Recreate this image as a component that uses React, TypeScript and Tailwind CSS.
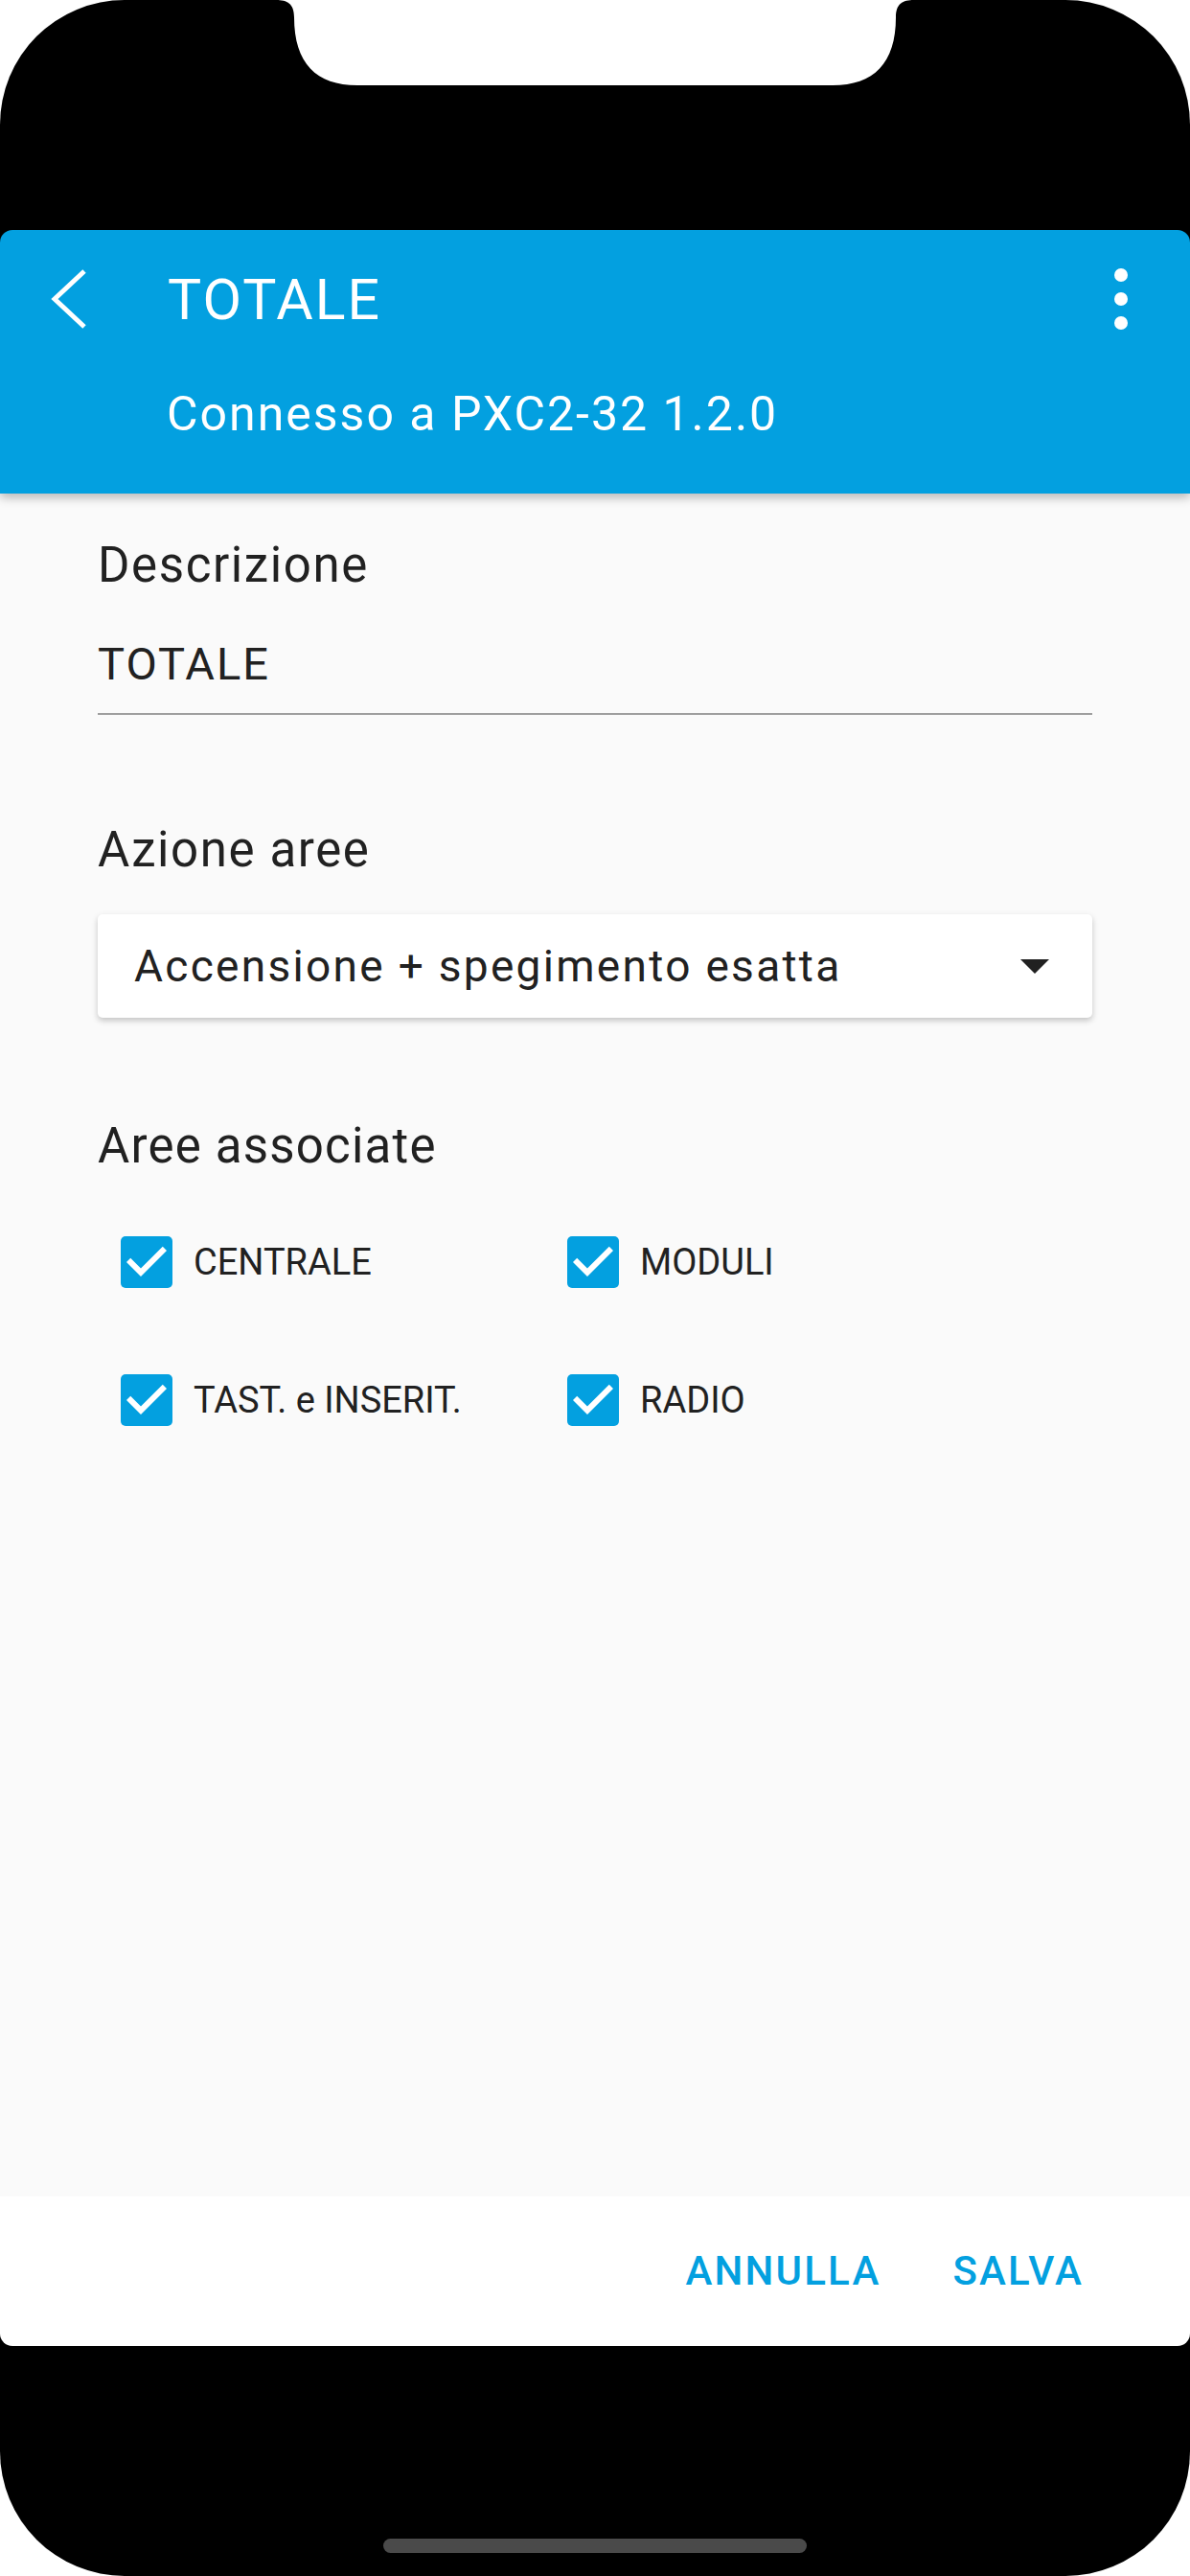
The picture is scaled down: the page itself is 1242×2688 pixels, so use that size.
const areas = ['CENTRALE', 'MODULI', 'TAST. e INSERIT.', 'RADIO'];

const Checkbox = ({ label }: { label: string }) => (
    <div className="flex items-center gap-[22px]">
        <div className="w-[54px] h-[54px] rounded-[5px] bg-[#03a0e0]">
            <svg width="54" height="54" viewBox="3 3 18 18">
                <path d="M10 17l-5-5 1.41-1.41L10 14.17l7.59-7.59L19 8l-9 9z" fill="white" />
            </svg>
        </div>
        <span className="text-[38px] leading-none text-[#212121]">{label}</span>
    </div>
);

const App = () => {
    return (
        <div className="w-[1242px] h-[2688px] bg-white font-['Roboto',sans-serif]">
            <div className="relative w-full h-full bg-black rounded-[130px] flex flex-col">
                {/* notch */}
                <svg className="absolute top-0 left-0" width="1242" height="100" viewBox="0 0 1242 100">
                    <path
                        d="M288 0 C300 0 307 4 307 18 C307 66 330 89 373 89 L869 89 C912 89 935 66 935 18 C935 4 942 0 954 0 Z"
                        fill="white"
                    />
                </svg>

                <div className="h-[240px] shrink-0" />

                <div className="flex flex-col rounded-[13px] overflow-hidden">
                    {/* app bar */}
                    <header className="relative z-10 h-[275px] bg-[#03a0e0] text-white pt-[22px] shadow-[0_4px_10px_rgba(0,0,0,0.28)]">
                        <div className="h-[100px] flex items-center">
                            <div className="w-[175px] pl-[50px]">
                                <svg width="44" height="70" viewBox="0 0 44 70">
                                    <polyline points="38,6 7,35 38,64" fill="none" stroke="white" strokeWidth="5" />
                                </svg>
                            </div>
                            <h1 className="flex-1 text-[59px] leading-none font-normal tracking-[2px]">TOTALE</h1>
                            <div className="mr-[65px] flex flex-col gap-[11px]">
                                <span className="w-[14px] h-[14px] rounded-full bg-white" />
                                <span className="w-[14px] h-[14px] rounded-full bg-white" />
                                <span className="w-[14px] h-[14px] rounded-full bg-white" />
                            </div>
                        </div>
                        <p className="mt-[45px] pl-[174px] text-[50px] leading-none tracking-[2px]">Connesso a PXC2-32 1.2.0</p>
                    </header>

                    {/* form */}
                    <main className="h-[1777px] bg-[#fafafa] px-[102px] pt-[49px] text-[#212121]">
                        <label className="block text-[51px] leading-none tracking-[1.6px]">Descrizione</label>
                        <div className="mt-[54px] text-[47px] leading-none tracking-[2px]">TOTALE</div>
                        <div className="mt-[28px] h-[2px] bg-[#9e9e9e]" />

                        <label className="block mt-[115px] text-[51px] leading-none tracking-[1.6px]">Azione aree</label>
                        <div className="mt-[42px] h-[108px] bg-white rounded-[5px] shadow-[0_3px_6px_rgba(0,0,0,0.22)] flex items-center justify-between pl-[38px] pr-[45px]">
                            <span className="text-[46px] leading-none tracking-[2.3px]">Accensione + spegimento esatta</span>
                            <svg width="30" height="15" viewBox="0 0 30 15">
                                <path d="M0 0 L30 0 L15 15 Z" fill="#212121" />
                            </svg>
                        </div>

                        <label className="block mt-[108px] text-[51px] leading-none tracking-[1.2px]">Aree associate</label>
                        <div className="mt-[69px] pl-[24px] grid grid-cols-[466px_1fr] gap-y-[90px]">
                            {areas.map((a) => (
                                <Checkbox key={a} label={a} />
                            ))}
                        </div>
                    </main>

                    {/* actions */}
                    <footer className="h-[156px] bg-white flex items-center justify-end gap-[75px] pr-[111px] text-[#03a0e0] text-[42px] leading-none font-medium tracking-[2.2px]">
                        <button>ANNULLA</button>
                        <button>SALVA</button>
                    </footer>
                </div>

                <div className="flex-1 flex items-end justify-center pb-[24px]">
                    <div className="w-[442px] h-[15px] rounded-full bg-[#4a4a4a]" />
                </div>
            </div>
        </div>
    );
};

export default App;
